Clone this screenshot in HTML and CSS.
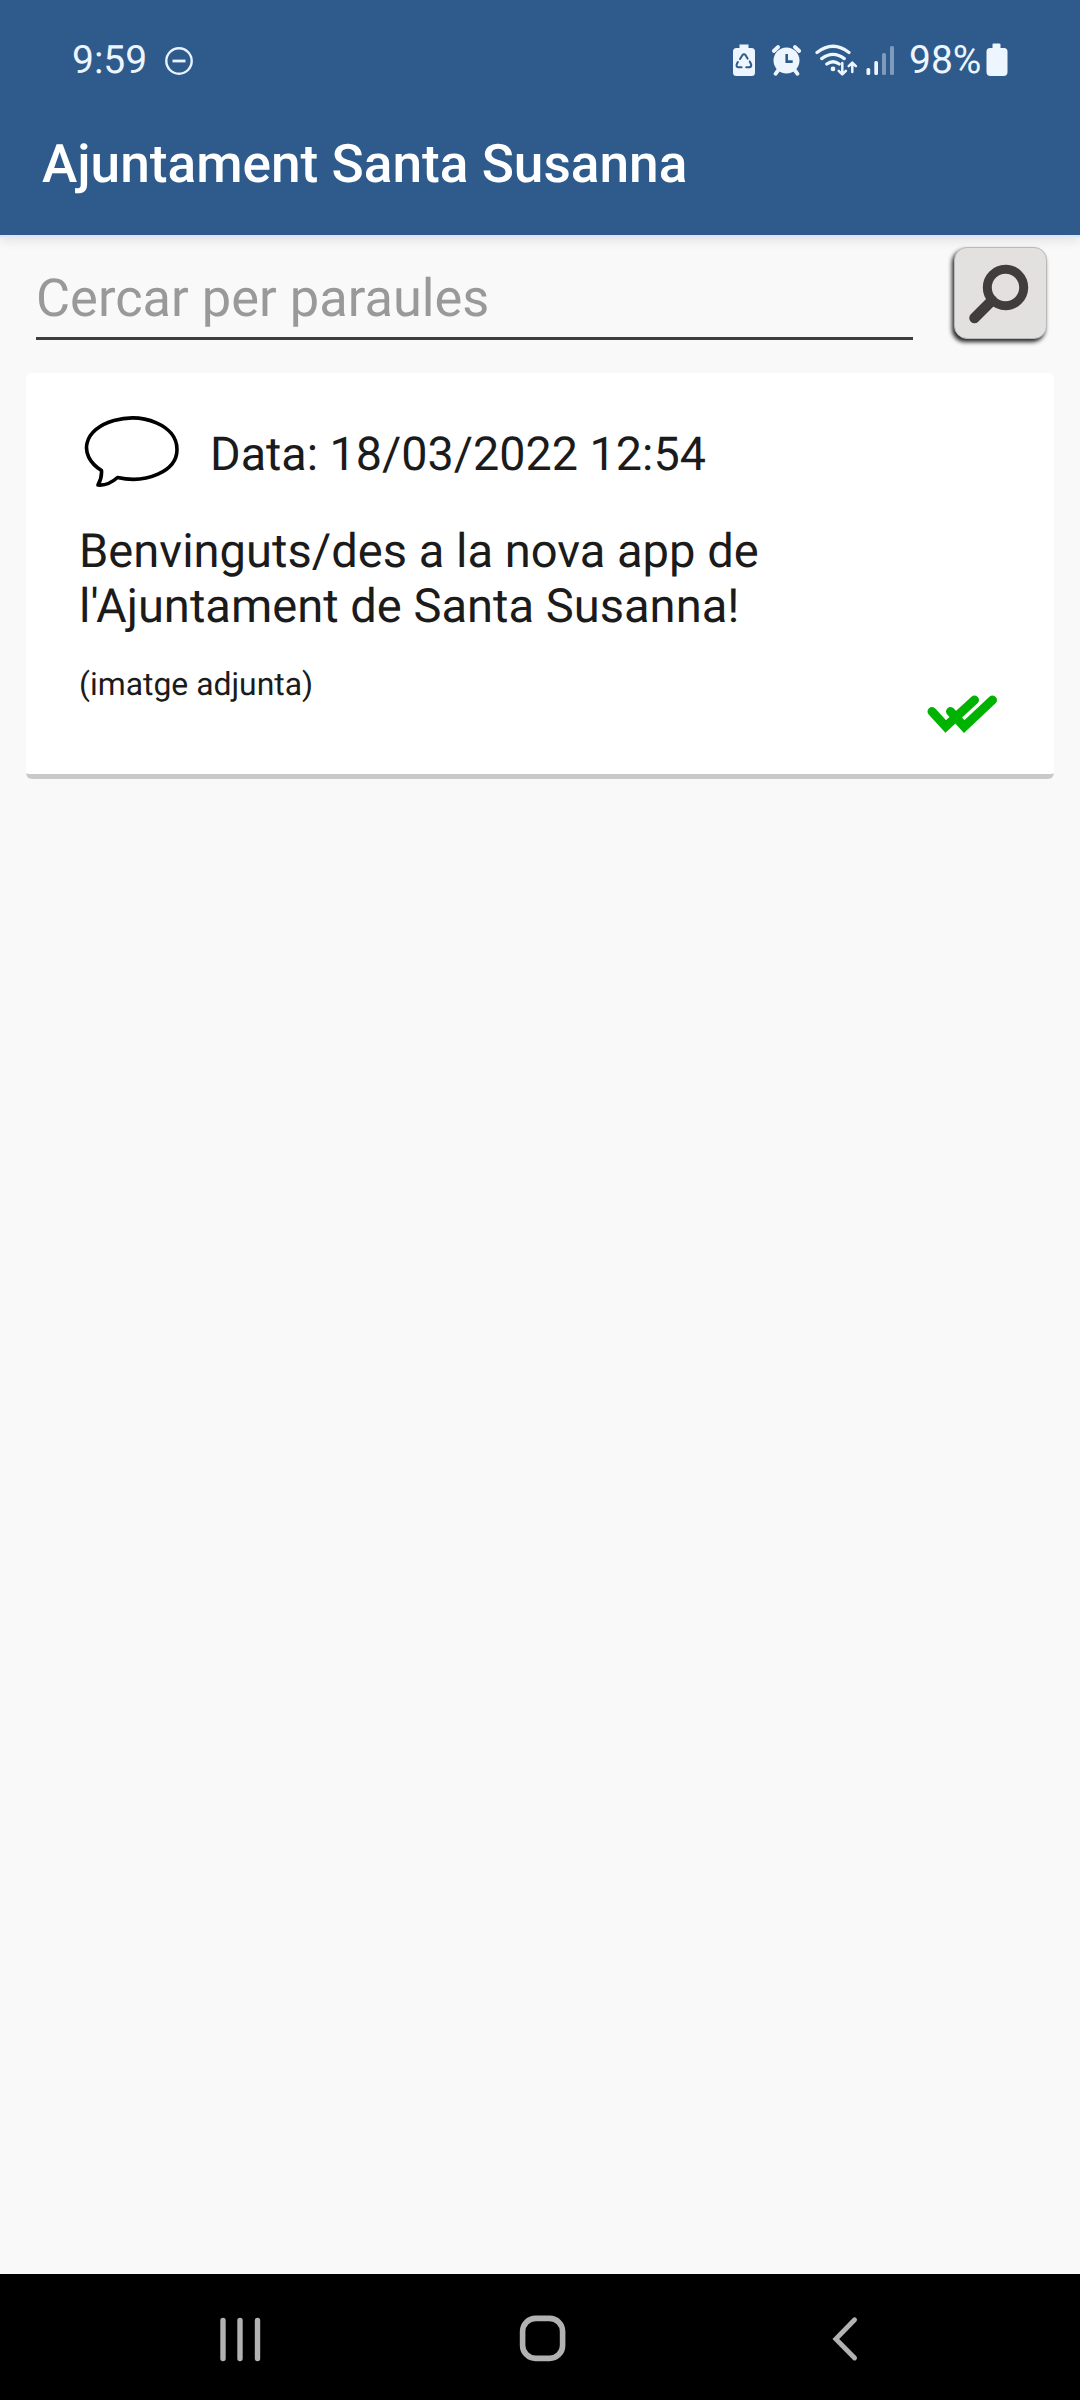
FILE: index.html
```html
<!DOCTYPE html>
<html lang="ca">
<head>
<meta charset="utf-8">
<title>Ajuntament Santa Susanna</title>
<link rel="stylesheet" href="styles.css">
</head>
<body>
<div class="screen">
  <header class="header">
    <div class="status">
      <span class="clock">9:59</span>
      <svg class="dnd" width="30" height="30" viewBox="0 0 30 30"><circle cx="15" cy="15" r="12.7" fill="none" stroke="#e9f3ff" stroke-width="2.4"/><path d="M8.5 15h13" stroke="#e9f3ff" stroke-width="2.8"/></svg>
      <svg class="tray" width="172" height="36" viewBox="730 42 172 36" fill="#edf5ff" stroke-linecap="round" stroke-linejoin="round">
        <path d="M739.5 44.5h9v3.5h3a3.5 3.5 0 0 1 3.500 3.500v21a3.500 3.500 0 0 1-3.500 3.500h-15a3.500 3.500 0 0 1-3.500-3.500v-21a3.500 3.500 0 0 1 3.500-3.500h3z"/>
        <g fill="none" stroke="#2e5b8b" stroke-width="2"><path d="M740 59l2.700-4.200q1.300-1.300 2.600 0l2.300 3.800M737.800 62l-1.200 2.600q-.4 2.600 2 2.700h3M749.800 61.500l1.400 3q.3 2.500-2 2.800h-3"/></g>
        <circle cx="786.500" cy="60.500" r="13"/>
        <path d="M773.800 51l4.300-4M799.200 51l-4.300-4M778 70.500l-2.500 3.300M795 70.500l2.500 3.300" fill="none" stroke="#edf5ff" stroke-width="3.800"/>
        <path d="M786.700 54v7.600h6" fill="none" stroke="#2e5b8b" stroke-width="2.600" stroke-linecap="butt" stroke-linejoin="miter"/>
        <g fill="none" stroke="#edf5ff" stroke-width="3.200"><path d="M817 52.500q16-12.500 32 0M821.700 58.600q11.300-8.400 22.600 0M826.800 64q6.200-4.500 12.400 0"/><path stroke-width="2.500" d="M842.300 63v10.500M838.700 70.800l3.600 3.600 3.600-3.600M852.300 72v-8.500M848.700 66.200l3.600-3.600 3.600 3.600"/></g>
        <circle cx="833" cy="68.900" r="2.400"/>
        <rect x="866.500" y="68" width="3.700" height="7" rx="1.500"/><rect x="874.300" y="61" width="3.700" height="14" rx="1.500"/>
        <g opacity=".42"><rect x="882" y="53" width="4" height="22" rx="1.500"/><rect x="890" y="46" width="4" height="29" rx="1.500"/></g>
      </svg>
      <span class="percent">98%</span>
      <svg class="battery" width="22" height="34" viewBox="0 0 22 34"><path fill="#edf5ff" d="M6.500 1.500q0-1 1-1h6q1 0 1 1V5H18a3.500 3.500 0 0 1 3.500 3.500V29a4 4 0 0 1-4 4h-13a4 4 0 0 1-4-4V8.500A3.500 3.500 0 0 1 4 5h2.500z"/></svg>
    </div>
    <h1 class="title">Ajuntament Santa Susanna</h1>
  </header>
  <main class="main">
    <div class="search">
      <div class="field">Cercar per paraules</div>
      <div class="button">
        <svg width="92" height="92" viewBox="0 0 92 92" fill="none" stroke="#403d3c"><circle cx="50.500" cy="39.500" r="18.200" stroke-width="9"/><path d="M37 52.500L19.500 70" stroke-width="10.500" stroke-linecap="round"/></svg>
      </div>
    </div>
    <article class="card">
      <div class="meta">
        <svg class="bubble" width="98" height="74" viewBox="0 0 98 74" fill="none" stroke="#000" stroke-width="3.600" stroke-linejoin="round"><path d="M17.500 54.500C-7 39-.5 13 30 4.500C59-3.500 93 9 93 33.500C93 55.500 62 68 33.500 61.500Q24 70 14 69Q18 62 17.500 54.500Z"/></svg>
        <span class="date">Data: 18/03/2022 12:54</span>
      </div>
      <p class="message">Benvinguts/des a la nova app de<br>l'Ajuntament de Santa Susanna!</p>
      <p class="attachment">(imatge adjunta)</p>
      <svg class="read" width="72" height="40" viewBox="0 0 72 40" fill="none" stroke="#00b300" stroke-width="9" stroke-linecap="round" stroke-linejoin="miter"><path d="M5 17.500L18.700 32.500L47.500 6M23.500 17.500L37.200 32.500L65.500 6"/></svg>
    </article>
  </main>
  <nav class="nav">
    <svg width="48" height="48" viewBox="0 0 48 48" stroke="#b2b2b2" stroke-width="5.400" stroke-linecap="round"><path d="M7 5.500v38M24 5.500v38M41.500 5.500v38"/></svg>
    <svg width="48" height="48" viewBox="0 0 48 48" fill="none" stroke="#b2b2b2" stroke-width="5.600"><rect x="3.600" y="3.400" width="40" height="40" rx="13"/></svg>
    <svg width="48" height="48" viewBox="0 0 48 48" fill="none" stroke="#b2b2b2" stroke-width="4.800" stroke-linecap="round"><path d="M32.600 4.800L13.800 24L32.600 43"/></svg>
  </nav>
</div>
</body>
</html>
```
FILE: styles.css
```css
* { box-sizing: border-box; }
body { margin: 0; font-family: Roboto, sans-serif; background: #f9f9f9; text-rendering: geometricPrecision; }
svg { display: block; flex: none; }
.screen { width: 1080px; height: 2400px; display: flex; flex-direction: column; }
.header { height: 235px; background: #2e5b8b; box-shadow: 0 2px 1px #dce5f4, 0 4px 12px rgba(0,0,0,.12); }
.status { height: 112px; padding: 8px 70px 0 72px; display: flex; align-items: center; color: #edf5ff; font-size: 39px; line-height: 50px; white-space: nowrap; }
.clock { width: 92px; }
.dnd { margin-top: 1px; }
.tray { margin-left: 536px; }
.percent { margin-left: 7px; width: 76px; }
.battery { margin-left: 1px; }
.title { margin: 0; padding-left: 42px; font-size: 53.200px; line-height: 64px; padding-top: 20px; font-weight: 500; color: #fff; white-space: nowrap; }
.main { flex: 1; }
.search { height: 138px; display: flex; align-items: flex-start; padding: 11px 33px 0 36px; }
.field { width: 877px; height: 94px; border-bottom: 3px solid #403d3d; padding-top: 22px; font-size: 52.400px; line-height: 60px; color: #999; white-space: nowrap; }
.button { margin: 1px 0 0 41px; width: 93px; height: 92px; border: 1.500px solid #b9b9b9; border-radius: 13px; background: #e2e1e0; box-shadow: -2px 3px 4px rgba(0,0,0,.85); }
.card { margin: 0 26px; height: 406px; padding: 41px 56px 0 53px; background: #fff; border-bottom: 5px solid #c9c9c9; border-radius: 6px; color: #1b1b1b; }
.meta { height: 78px; display: flex; align-items: flex-start; gap: 28px; padding-left: 5px; }
.bubble { margin-top: 2px; }
.date { font-size: 46.700px; line-height: 56px; padding-top: 13px; white-space: nowrap; }
.message { margin: 32px 0 0; font-size: 47.100px; line-height: 55px; white-space: nowrap; }
.attachment { margin: 31px 0 0; font-size: 31.900px; line-height: 38px; white-space: nowrap; }
.read { margin: -9px -1px 0 auto; }
.nav { height: 126px; background: #000; padding: 41px 210px 0 216px; display: flex; justify-content: space-between; }
```
